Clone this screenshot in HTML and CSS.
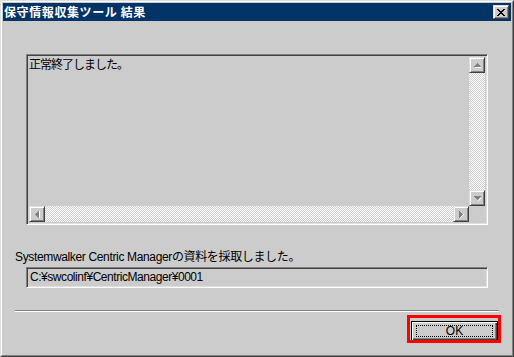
FILE: index.html
```html
<!DOCTYPE html>
<html lang="ja">
<head>
<meta charset="utf-8">
<title>保守情報収集ツール 結果</title>
<link rel="stylesheet" href="styles.css">
</head>
<body>
<div class="window">
  <div class="frame">
    <div class="titlebar">
      <span class="title">保守情報収集ツール 結果</span>
      <span class="close raised">
        <svg width="8" height="7" viewBox="0 0 8 7"><path d="M0 0h2v1h-2zM6 0h2v1h-2zM1 1h2v1h-2zM5 1h2v1h-2zM2 2h4v1h-4zM3 3h2v1h-2zM2 4h4v1h-4zM1 5h2v1h-2zM5 5h2v1h-2zM0 6h2v1h-2zM6 6h2v1h-2z" fill="#000"/></svg>
      </span>
    </div>
    <div class="content">
      <div class="textbox sunken">
        <div class="textarea-body">正常終了しました。</div>
        <div class="vscroll">
          <span class="sbtn raised">
            <svg width="7" height="5" viewBox="0 0 7 5"><path d="M1 4h6v1h-6z" fill="#fff"/><path d="M3 0h1v1h1v1h1v1h1v1h-7v-1h1v-1h1v-1h1z" fill="#808080"/></svg>
          </span>
          <span class="track"></span>
          <span class="sbtn raised">
            <svg width="7" height="5" viewBox="0 0 7 5"><path d="M4 4h1v-1h1v-1h1v1h-1v1h-1v1h-1z" fill="#fff"/><path d="M0 0h7v1h-1v1h-1v1h-1v1h-1v-1h-1v-1h-1v-1h-1z" fill="#808080"/></svg>
          </span>
        </div>
        <div class="hscroll">
          <span class="sbtn raised">
            <svg width="5" height="7" viewBox="0 0 5 7"><path d="M4 0h1v7h-1z" fill="#fff"/><path d="M3 0h1v7h-1v-1h-1v-1h-1v-1h-1v-1h1v-1h1v-1h1z" fill="#808080"/></svg>
          </span>
          <span class="track"></span>
          <span class="sbtn raised">
            <svg width="5" height="7" viewBox="0 0 5 7"><path d="M1 6h1v-1h1v-1h1v-1h1v1h-1v1h-1v1h-1v1h-1z" fill="#fff"/><path d="M0 0h1v1h1v1h1v1h1v1h-1v1h-1v1h-1v1h-1z" fill="#808080"/></svg>
          </span>
        </div>
        <div class="corner"></div>
      </div>
      <div class="label">Systemwalker Centric Managerの資料を採取しました。</div>
      <div class="pathfield sunken">C:¥swcolinf¥CentricManager¥0001</div>
      <div class="separator"></div>
      <div class="buttonrow">
        <div class="okbtn"><span class="focus">OK</span></div>
        <div class="highlight"></div>
      </div>
    </div>
  </div>
</div>
</body>
</html>
```

FILE: styles.css
```css
* { box-sizing: border-box; }
html, body {
  margin: 0;
  padding: 0;
  background: #cccccc;
}
body {
  width: 514px;
  height: 357px;
  font-family: "Liberation Sans", "Noto Sans CJK JP", sans-serif;
  font-size: 12px;
  color: #000;
}
.window {
  width: 514px;
  height: 357px;
  border: 1px solid;
  border-color: #dfdfdf #404040 #404040 #dfdfdf;
}
.frame {
  height: 100%;
  border: 1px solid;
  border-color: #ffffff #808080 #808080 #ffffff;
  padding: 1px;
  background: #cccccc;
  display: flex;
  flex-direction: column;
}
.raised {
  border: 1px solid;
  border-color: #dfdfdf #404040 #404040 #dfdfdf;
  box-shadow: inset 1px 1px #ffffff, inset -1px -1px #808080;
  background: #cccccc;
}
.sunken {
  border: 1px solid;
  border-color: #808080 #ffffff #ffffff #808080;
  box-shadow: inset 1px 1px #404040, inset -1px -1px #dfdfdf;
}
.titlebar {
  height: 18px;
  background: #003366;
  display: flex;
  align-items: center;
  justify-content: space-between;
  padding: 0 2px 0 1px;
}
.title {
  color: #fff;
  font-family: "Noto Sans CJK JP", sans-serif;
  font-weight: bold;
  font-size: 12px;
  line-height: 14px;
  letter-spacing: 0.6px;
}
.close {
  width: 16px;
  height: 14px;
  display: flex;
  align-items: center;
  justify-content: center;
}
.close svg { display: block; margin-left: -1px; }
.content {
  flex: 1;
  display: flex;
  flex-direction: column;
  align-items: flex-start;
  padding-left: 12px;
}
.textbox {
  margin-top: 33px;
  margin-left: 11px;
  width: 462px;
  height: 171px;
  display: grid;
  grid-template-columns: 1fr 16px;
  grid-template-rows: 1fr 16px;
  padding: 2px;
  background: #cccccc;
}
.textarea-body {
  font-family: "Noto Sans CJK JP", sans-serif;
  font-size: 12px;
  line-height: 14px;
  letter-spacing: -1px;
}
.vscroll {
  display: flex;
  flex-direction: column;
}
.hscroll {
  display: flex;
  flex-direction: row;
}
.sbtn {
  width: 16px;
  height: 16px;
  flex: none;
  display: flex;
  align-items: center;
  justify-content: center;
}
.sbtn svg { display: block; }
.track {
  flex: 1;
  background-color: #cccccc;
  background-image: conic-gradient(#ffffff 25%, #cccccc 0 50%, #ffffff 0 75%, #cccccc 0);
  background-size: 2px 2px;
}
.corner { background: #cccccc; }
.label {
  margin-top: 25px;
  line-height: 14px;
  font-size: 12px;
  letter-spacing: -0.35px;
}
.pathfield {
  margin-top: 3px;
  margin-left: 11px;
  width: 462px;
  height: 21px;
  padding: 2px 3px 0 3px;
  line-height: 15px;
  font-size: 12px;
  letter-spacing: -0.45px;
  background: #cccccc;
}
.separator {
  margin-top: 22px;
  width: 484px;
  height: 2px;
  border-top: 1px solid #808080;
  border-bottom: 1px solid #ffffff;
}
.buttonrow {
  position: relative;
  margin-top: 9px;
  margin-left: 396px;
}
.okbtn {
  width: 87px;
  height: 20px;
  border: 1px solid #000;
  background: #cccccc;
  box-shadow: inset 1px 1px #ffffff, inset -1px -1px #404040, inset -2px -2px #808080;
  padding: 3px 4px;
  display: flex;
}
.focus {
  flex: 1;
  border: 1px dotted #000;
  text-align: center;
  line-height: 11px;
  font-size: 12px;
}
.highlight {
  position: absolute;
  left: -4px;
  top: -6px;
  width: 94px;
  height: 28px;
  border: 3px solid #ff0000;
}
```
